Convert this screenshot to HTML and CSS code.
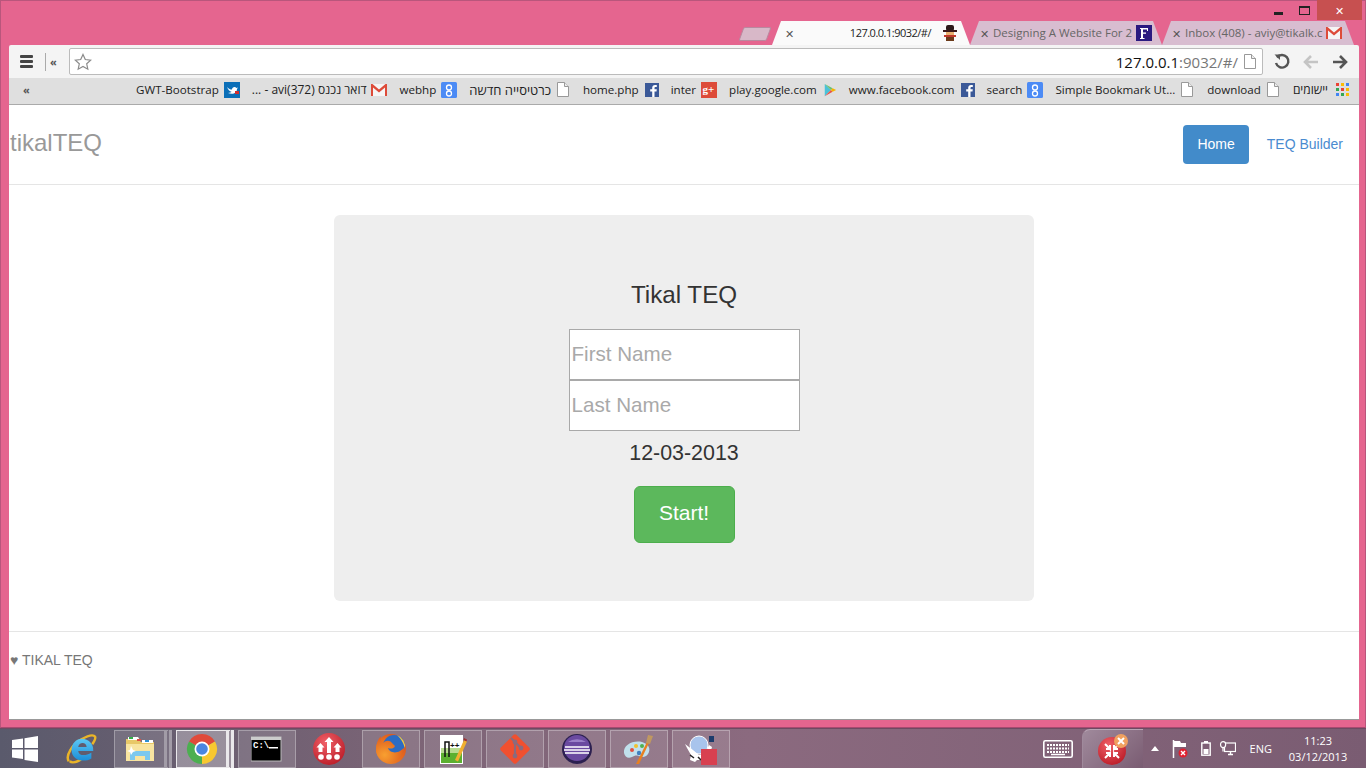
FILE: index.html
```html
<!DOCTYPE html>
<html lang="en">
<head>
    <meta charset="UTF-8">
    <meta name="viewport" content="width=device-width, initial-scale=1.0">
    <title>tikalTEQ</title>
    <link rel="stylesheet" href="styles.css">
</head>
<body>

    <svg class="defs" width="0" height="0">
        <symbol id="i-doc" viewBox="0 0 12 15"><path d="M.5.5h7l4 4v10H.5z" fill="#fff" stroke="#999"/><path d="M7.5.5v4h4" fill="#eee" stroke="#999"/></symbol>
        <symbol id="i-gmail" viewBox="0 0 16 12"><rect width="16" height="12" fill="#f5f5f5"/><path d="M0 0h1.500L8 5.500 14.500 0H16v12h-2V3.500L8 8.500 2 3.500V12H0z" fill="#dd4b39"/></symbol>
        <symbol id="i-g" viewBox="0 0 16 16"><rect width="16" height="16" rx="1.500" fill="#4c8bf5"/><circle cx="8" cy="5.500" r="2.500" fill="none" stroke="#fff" stroke-width="1.300"/><circle cx="8" cy="11.500" r="2.500" fill="none" stroke="#fff" stroke-width="1.300"/></symbol>
        <symbol id="i-fb" viewBox="0 0 14 14"><rect width="14" height="14" fill="#3b5998"/><path d="M9.500 14V8.500h2l.3-2.200H9.500V5c0-.7.300-1.100 1.100-1.100h1.200V2c-.5-.1-1.100-.1-1.700-.1-1.800 0-2.900 1-2.900 2.900v1.500h-2v2.200h2V14z" fill="#fff"/></symbol>
        <linearGradient id="g-ie" x1="0" y1="0" x2="0" y2="1"><stop offset="0" stop-color="#5cc8f4"/><stop offset="1" stop-color="#1c8ed8"/></linearGradient>
        <radialGradient id="g-red" cx=".4" cy=".3" r=".8"><stop offset="0" stop-color="#f06068"/><stop offset="1" stop-color="#b81824"/></radialGradient>
        <radialGradient id="g-fox" cx=".3" cy=".7" r=".9"><stop offset="0" stop-color="#f8a030"/><stop offset="1" stop-color="#d84a18"/></radialGradient>
    </svg>

    <div class="window">
        <div class="window-controls">
            <span class="win-btn"><i class="min"></i></span>
            <span class="win-btn"><i class="max"></i></span>
            <span class="win-btn close">&#10005;</span>
        </div>

        <div class="tabstrip">
            <span class="new-tab"></span>
            <div class="tab active">
                <span class="tab-x">&#10005;</span>
                <span class="tab-title">127.0.0.1:9032/#/</span>
                <svg class="tab-icon" viewBox="0 0 16 16"><rect x="4" y="0" width="8" height="6" rx="2" fill="#2a1a1a"/><rect x="1" y="5" width="14" height="2" fill="#3a1a1a"/><rect x="4" y="7" width="8" height="3" fill="#e8b070"/><rect x="2" y="10" width="12" height="2" fill="#c0392b"/><rect x="4" y="12" width="8" height="4" fill="#6b3a1a"/></svg>
            </div>
            <div class="tab">
                <span class="tab-x">&#10005;</span>
                <span class="tab-title">Designing A Website For 2</span>
                <svg class="tab-icon" viewBox="0 0 16 16"><rect width="16" height="16" fill="#2a1a80"/><path d="M4 3h8v3h-1V4.500H7v3h3v1.300H7V13h1.500v1H4v-1h1V4H4z" fill="#fff"/></svg>
            </div>
            <div class="tab">
                <span class="tab-x">&#10005;</span>
                <span class="tab-title">Inbox (408) - aviy@tikalk.c</span>
                <svg class="tab-icon"><use href="#i-gmail"/></svg>
            </div>
        </div>

        <div class="chrome">
            <div class="toolbar">
                <div class="menu-icon"><i></i><i></i><i></i></div>
                <span class="tool-sep"></span>
                <span class="chevrons">&laquo;</span>
                <div class="omnibox">
                    <svg class="star" viewBox="0 0 18 18"><path d="M9 1.500l2.300 5 5.400.6-4 3.700 1.100 5.400L9 13.500l-4.800 2.700 1.100-5.400-4-3.700 5.400-.6z" fill="#fff" stroke="#8a8a8a" stroke-width="1.200"/></svg>
                    <span class="url"><b>127.0.0.1</b>:9032/#/</span>
                    <svg class="url-doc"><use href="#i-doc"/></svg>
                </div>
                <svg class="nav-icon reload" viewBox="0 0 18 18"><path d="M4 4.500A6.300 6.300 0 1 1 3 10" fill="none" stroke="#555" stroke-width="2.400"/><path d="M1.500 1.500h5.500v5.500z" fill="#555"/></svg>
                <svg class="nav-icon back" viewBox="0 0 18 18"><path d="M17 9H5M10 3L4 9l6 6" fill="none" stroke="#c4c4c4" stroke-width="2.600"/></svg>
                <svg class="nav-icon" viewBox="0 0 18 18"><path d="M1 9h12M8 3l6 6-6 6" fill="none" stroke="#555" stroke-width="2.600"/></svg>
            </div>

            <div class="bookmarks">
                <span class="chevrons bm-more">&laquo;</span>
                <a class="bm">GWT-Bootstrap<svg class="bm-icon" viewBox="0 0 16 16"><rect width="16" height="16" fill="#0b6fb8"/><path d="M3 5c2 2 3 2.500 5 2.500C8 5 11 4 12.500 6L14 5.500 13 7c0 4-4 6-9 4 2 0 3-.5 3.500-1.200C5.500 9.500 4 7.500 3 5z" fill="#fff"/><rect x="11" y="9" width="4" height="3" fill="#d03030"/></svg></a>
                <a class="bm"><bdi dir="rtl">דואר נכנס (372)avi - ...</bdi><svg class="bm-icon"><use href="#i-gmail"/></svg></a>
                <a class="bm">webhp<svg class="bm-icon"><use href="#i-g"/></svg></a>
                <a class="bm"><bdi dir="rtl" class="he-wide">כרטיסייה חדשה</bdi><svg class="bm-doc"><use href="#i-doc"/></svg></a>
                <a class="bm">home.php<svg class="bm-icon fb"><use href="#i-fb"/></svg></a>
                <a class="bm">inter<svg class="bm-icon" viewBox="0 0 16 16"><rect width="16" height="16" fill="#dd4b39"/><text x="1.500" y="11" class="gplus-text">g+</text></svg></a>
                <a class="bm">play.google.com<svg class="bm-icon fb" viewBox="0 0 14 16"><path d="M1 1l7 7-7 7z" fill="#4cc2d8"/><path d="M1 1l9 5-2 2z" fill="#6cc070"/><path d="M1 15l9-5-2-2z" fill="#e8544a"/><path d="M10 6l4 2-4 2-2-2z" fill="#f4b400"/></svg></a>
                <a class="bm">www.facebook.com<svg class="bm-icon fb"><use href="#i-fb"/></svg></a>
                <a class="bm">search<svg class="bm-icon"><use href="#i-g"/></svg></a>
                <a class="bm">Simple Bookmark Ut...<svg class="bm-doc"><use href="#i-doc"/></svg></a>
                <a class="bm">download<svg class="bm-doc"><use href="#i-doc"/></svg></a>
                <a class="bm"><bdi dir="rtl">יישומים</bdi><svg class="bm-apps" viewBox="0 0 13 13"><rect width="3" height="3" fill="#ea4335"/><rect x="5" width="3" height="3" fill="#fbbc05"/><rect x="10" width="3" height="3" fill="#4285f4"/><rect y="5" width="3" height="3" fill="#34a853"/><rect x="5" y="5" width="3" height="3" fill="#ea4335"/><rect x="10" y="5" width="3" height="3" fill="#fbbc05"/><rect y="10" width="3" height="3" fill="#4285f4"/><rect x="5" y="10" width="3" height="3" fill="#34a853"/><rect x="10" y="10" width="3" height="3" fill="#fbbc05"/></svg></a>
            </div>

            <div class="page">
                <nav class="navbar">
                    <a class="brand">tikalTEQ</a>
                    <ul class="nav">
                        <li class="current">Home</li>
                        <li>TEQ Builder</li>
                    </ul>
                </nav>

                <div class="jumbotron">
                    <h2>Tikal TEQ</h2>
                    <input type="text" placeholder="First Name">
                    <input type="text" placeholder="Last Name">
                    <p class="date">12-03-2013</p>
                    <button class="btn-start">Start!</button>
                </div>

                <footer class="footer">&hearts; TIKAL TEQ</footer>
            </div>
        </div>
    </div>

    <div class="taskbar">
        <div class="start">
            <svg viewBox="0 0 26 26" width="26" height="26"><path d="M0 4l11-1.500V12H0zM12.500 2.300L26 0v12H12.500zM0 13.500h11V23L0 21.500zM12.500 13.500H26V26l-13.500-2z" fill="#fff"/></svg>
        </div>
        <div class="task plain">
            <svg viewBox="0 0 34 34"><path d="M4 30C0 24 8 12 17 7c7-4 13-6 15-3 1 2-1 5-3 8" fill="none" stroke="#eab428" stroke-width="2.600"/><path d="M5 30c2 2 7 1 12-2" fill="none" stroke="#eab428" stroke-width="2.600"/><path d="M18 6a12 12 0 0 1 12 13H14c.5 5 7 6 14 2v6c-8 5-21 2-21-9 0-7 5-12 11-12zm-4 9h9c0-6-8.500-6-9 0z" fill="url(#g-ie)"/></svg>
        </div>
        <div class="task stacked">
            <svg viewBox="0 0 32 32"><path d="M2 6h12l3 3h13v19H2z" fill="#e8c868"/><path d="M4 4h10l2 3H4z" fill="#fff"/><rect x="5" y="4" width="4" height="2" fill="#34b048"/><rect x="13" y="6" width="4" height="2" fill="#e05040"/><path d="M18 7h11v3H18z" fill="#fff"/><rect x="21" y="7" width="4" height="2" fill="#3090d0"/><path d="M2 11h28v17H2z" fill="#f8e4a0"/><path d="M6 27v-9h20v9h-5v-4H11v4z" fill="#7cc8ee"/><path d="M7 13l2 4 3 1-3 1-2 3-1-3-3-1 3-1z" fill="#fff"/></svg>
        </div>
        <div class="task stacked light">
            <svg viewBox="0 0 32 32"><path d="M3 8.500A15 15 0 0 1 29 8.500L16 16z" fill="#e04a3a"/><path d="M29 8.500A15 15 0 0 1 16 31L16 16z" fill="#f8c830"/><path d="M16 31A15 15 0 0 1 3 8.500L16 16z" fill="#4caf50"/><circle cx="16" cy="16" r="7.500" fill="#fff"/><circle cx="16" cy="16" r="5.800" fill="#4a86e0"/></svg>
        </div>
        <div class="task">
            <svg viewBox="0 0 32 28"><rect width="30" height="24" y="2" fill="#000" stroke="#bbb"/><rect y="2" width="30" height="3" fill="#ccc"/><text x="2" y="13" class="cmd-text">C:\</text><rect x="18" y="12" width="9" height="1.500" fill="#fff"/></svg>
        </div>
        <div class="task plain">
            <svg viewBox="0 0 32 32"><circle cx="16" cy="16" r="16" fill="url(#g-red)"/><path d="M16 4l4.500 5H18v11h-4V9h-2.500zM7.500 10l4 4.500h-2V19h-4v-4.500h-2zM24.500 10l4 4.500h-2V19h-4v-4.500h-2z" fill="#fff"/><circle cx="8" cy="24" r="2.800" fill="#fff"/><circle cx="16" cy="24" r="2.800" fill="#fff"/><circle cx="24" cy="24" r="2.800" fill="#fff"/></svg>
        </div>
        <div class="task">
            <svg viewBox="0 0 32 32"><circle cx="16" cy="16" r="15" fill="url(#g-fox)"/><circle cx="19" cy="13" r="11" fill="#2c6cc4"/><path d="M22 2a13 13 0 0 1 8 14c-1-5-3-9-8-14z" fill="#f4c840"/><path d="M6 3c-1 3 0 5 2 7 3-3 7-3 9 0l3 3c-1 3-5 3-7 2 1 4 7 6 12 3 1-1 3-2 5-4-1 9-7 16-15 16C7 30 1 24 1 16 1 11 3 6 6 3z" fill="url(#g-fox)"/></svg>
        </div>
        <div class="task">
            <svg viewBox="0 0 32 32"><rect x="3" y="2" width="23" height="29" fill="#fff"/><path d="M4 19h21v11H4z" fill="#5cb030"/><path d="M4 15h21v5H4z" fill="#b8dc90"/><path d="M8 24V9h4v15" fill="none" stroke="#111" stroke-width="1.500"/><text x="13" y="15" class="np-text">++</text><path d="M18 27l9-20 3 1.500-9 20z" fill="#f0b030"/><path d="M27 5l3 1.500-.5 2-3-1.500z" fill="#a03030"/></svg>
        </div>
        <div class="task">
            <svg viewBox="0 0 32 32"><rect x="5" y="5" width="22" height="22" rx="2" transform="rotate(45 16 16)" fill="#f05030"/><path d="M12 5l4 4M16 9v14M16 9l6 6" stroke="#8c6a7c" stroke-width="2.200" fill="none"/><circle cx="16" cy="9" r="2.400" fill="#8c6a7c"/><circle cx="16" cy="23" r="2.400" fill="#8c6a7c"/><circle cx="22" cy="15" r="2.400" fill="#8c6a7c"/></svg>
        </div>
        <div class="task">
            <svg viewBox="0 0 32 32"><circle cx="16" cy="16" r="15" fill="#2c2050"/><circle cx="16" cy="15" r="13" fill="#6a4aa0"/><path d="M4 14h24M3 17h26M4 20h24" stroke="#fff" stroke-width="1.400"/><path d="M7 9a12 8 0 0 1 18 0z" fill="#9a80c8"/></svg>
        </div>
        <div class="task">
            <svg viewBox="0 0 32 32"><path d="M1 20C0 12 10 7 19 9c7 2 9 7 6 12-3 4-6 3-9 2-3-1-5 0-7 1-4 2-7 0-8-4z" fill="#c0e0ec"/><circle cx="9" cy="17" r="2" fill="#e05040"/><circle cx="13" cy="13" r="2" fill="#f0c030"/><circle cx="19" cy="13" r="2" fill="#50b050"/><circle cx="16" cy="20" r="2.200" fill="#4080c0"/><path d="M13 31L24 9l2 1-10 21z" fill="#e88020"/><path d="M23 10l2-8 5 1-3 8z" fill="#c09860"/></svg>
        </div>
        <div class="task">
            <svg viewBox="0 0 32 32"><circle cx="14" cy="12" r="9" fill="#a8c4ec" stroke="#fff"/><path d="M0 11l8 6 6 5 6-2 4-8 3 2-3 10-4 3h-8l-2 2-5-2 1-5-4-7z" fill="#fff"/><path d="M5 22l4 3M13 24l3 3" stroke="#222" stroke-width="1.500"/><path d="M24 3h5v6h-5z" fill="#1c3c6c"/><rect x="16" y="16" width="16" height="16" fill="#d84050"/></svg>
        </div>

        <div class="tray">
            <svg class="keyboard" viewBox="0 0 30 18"><rect x=".8" y=".8" width="28.400" height="16.400" rx="1.500" fill="none" stroke="#fff" stroke-width="1.600"/><path d="M4 5h22M4 8.500h22M4 12h22" stroke="#fff" stroke-width="2" stroke-dasharray="2 1"/><path d="M8 14.500h14" stroke="#fff" stroke-width="1.500"/></svg>
            <div class="tray-app">
                <svg viewBox="0 0 34 34" width="34" height="34"><circle cx="16" cy="19" r="14" fill="url(#g-red)"/><path d="M9 12l5 5v-4M14 17h-4M23 12l-5 5v-4M18 17h4M9 26l5-5v4M14 21h-4M23 26l-5-5v4M18 21h4" fill="none" stroke="#fff" stroke-width="2"/><circle cx="25" cy="9" r="7" fill="#f0a060"/><path d="M22 6l6 6M28 6l-6 6" stroke="#fff" stroke-width="2"/></svg>
            </div>
            <span class="tray-arrow"></span>
            <svg class="tray-icon flag" viewBox="0 0 16 18"><path d="M1.500 0v18" stroke="#fff" stroke-width="1.500"/><path d="M2 1h6l1 2h5v4H2z" fill="#fff"/><circle cx="11" cy="13" r="4.500" fill="#e02030"/><path d="M9 11l4 4M13 11l-4 4" stroke="#fff" stroke-width="1.400"/></svg>
            <svg class="tray-icon battery" viewBox="0 0 10 15"><rect x=".8" y="2" width="8.400" height="12.200" fill="none" stroke="#fff" stroke-width="1.400"/><rect x="3" y="0" width="4" height="2" fill="#fff"/><rect x="2.500" y="8" width="5" height="5" fill="#fff"/></svg>
            <svg class="tray-icon network" viewBox="0 0 16 15"><rect x="4.500" y="2" width="11" height="8.500" fill="none" stroke="#fff" stroke-width="1.200"/><path d="M8 13.500h5M10.500 10.500v3" stroke="#fff" stroke-width="1.400"/><rect x=".6" y=".6" width="5" height="6" rx="2.500" fill="#7a5c72" stroke="#fff" stroke-width="1.200"/><path d="M3 6.500v4" stroke="#fff" stroke-width="1.200"/></svg>
            <span class="lang">ENG</span>
            <div class="clock"><span>11:23</span><span>03/12/2013</span></div>
        </div>
    </div>

</body>
</html>
```

FILE: styles.css
```css
* {
    box-sizing: border-box;
}

body {
    margin: 0;
    height: 100vh;
    overflow: hidden;
    display: flex;
    flex-direction: column;
    background-color: #e5658f;
    font-family: "Open Sans", sans-serif;
}

.defs {
    position: absolute;
}

/* browser window */
.window {
    flex: 1;
    min-height: 0;
    display: flex;
    flex-direction: column;
    position: relative;
    padding: 0 6px 7px 8px;
    border: 1px solid #b9567c;
    border-bottom-color: #a84a70;
}

.window-controls {
    position: absolute;
    top: -1px;
    right: 3px;
    display: flex;
    align-items: flex-start;
}

.win-btn {
    width: 26px;
    height: 20px;
    display: flex;
    align-items: center;
    justify-content: center;
}

.win-btn .min {
    width: 9px;
    height: 3px;
    margin-top: 6px;
    background-color: #222;
}

.win-btn .max {
    width: 11px;
    height: 9px;
    border: 1px solid #222;
    border-top-width: 2px;
}

.win-btn.close {
    width: 45px;
    background-color: #c75050;
    color: #fff;
    font-size: 11px;
}

.tabstrip {
    height: 44px;
    flex-shrink: 0;
    display: flex;
    justify-content: flex-end;
    align-items: flex-end;
    padding-right: 5px;
}

.new-tab {
    width: 28px;
    height: 14px;
    margin-right: 3px;
    margin-bottom: 4px;
    background-color: #d8b8c8;
    border: 1px solid #b9899f;
    border-radius: 2px;
    transform: skewX(-20deg);
}

.tab {
    height: 24px;
    width: 192px;
    display: flex;
    align-items: center;
    padding: 0 12px 0 10px;
    font-size: 11.500px;
    color: #666;
    background-color: #d8bdd0;
    clip-path: polygon(0 100%, 9px 0, calc(100% - 9px) 0, 100% 100%);
}

.tab.active {
    width: 198px;
    color: #222;
    background-color: #fafafa;
    padding-left: 13px;
}

.tab.active .tab-title {
    font-size: 11px;
    letter-spacing: -0.5px;
}

.tab-x {
    font-size: 11px;
    width: 13px;
    flex-shrink: 0;
    color: #555;
}

.tab-title {
    flex: 1;
    margin-bottom: 2px;
    text-align: right;
    white-space: nowrap;
}

.tab-icon {
    width: 16px;
    height: 16px;
    margin-left: 4px;
    flex-shrink: 0;
}

.tab.active .tab-icon {
    margin-left: 11px;
}

.chrome {
    flex: 1;
    min-height: 0;
    display: flex;
    flex-direction: column;
    border-bottom: 1px solid #999;
}

.toolbar {
    height: 33px;
    flex-shrink: 0;
    display: flex;
    align-items: center;
    padding: 0 9px 0 11px;
    background-color: #f4f4f4;
    border-radius: 2px 2px 0 0;
}

.menu-icon {
    width: 13px;
    display: flex;
    flex-direction: column;
    gap: 2px;
}

.menu-icon i {
    display: block;
    height: 3px;
    background-color: #444;
    border-radius: 1px;
}

.tool-sep {
    width: 1px;
    height: 18px;
    margin: 0 4px 0 12px;
    background-color: #aaa;
}

.chevrons {
    font-size: 11px;
    color: #555;
    font-weight: 700;
    width: 19px;
}

.omnibox {
    flex: 1;
    height: 27px;
    display: flex;
    align-items: center;
    padding: 0 6px 0 4px;
    background-color: #fff;
    border: 1px solid #bbb;
    border-radius: 2px;
    margin-right: 10px;
}

.star {
    width: 18px;
    height: 18px;
}

.url {
    flex: 1;
    text-align: right;
    font-size: 15px;
    color: #777;
}

.url b {
    font-weight: 400;
    color: #111;
}

.url-doc {
    width: 12px;
    height: 15px;
    margin-left: 6px;
}

.nav-icon {
    width: 18px;
    height: 18px;
}

.nav-icon.reload {
    margin-right: 10px;
}

.nav-icon.back {
    margin-right: 13px;
}

.bookmarks {
    height: 27px;
    flex-shrink: 0;
    display: flex;
    align-items: center;
    justify-content: flex-end;
    gap: 12px;
    padding: 0 10px 3px 14px;
    background-color: #dfdfdf;
    border-bottom: 1px solid #aaa;
    font-size: 11.600px;
    color: #222;
}

.bm-more {
    margin-right: auto;
}

.bm {
    display: flex;
    align-items: center;
    gap: 5px;
    white-space: nowrap;
}

.bm bdi {
    font-size: 12px;
}

.bm bdi.he-wide {
    font-size: 13px;
}

.bm-icon {
    width: 16px;
    height: 16px;
}

.bm-icon.fb {
    width: 14px;
    height: 14px;
    margin-left: 1px;
}

.bm-doc {
    width: 12px;
    height: 15px;
    margin: 0 2px 0 1px;
}

.bm-apps {
    width: 13px;
    height: 13px;
    margin-left: 3px;
}

.gplus-text {
    font-family: "Liberation Serif", serif;
    font-size: 11px;
    font-weight: 700;
    fill: #fff;
}

/* page inside the browser */
.page {
    flex: 1;
    min-height: 0;
    background-color: #fff;
    font-family: "Liberation Sans", Arial, sans-serif;
    color: #333;
}

.navbar {
    height: 80px;
    display: flex;
    align-items: center;
    justify-content: space-between;
    border-bottom: 1px solid #e5e5e5;
    padding: 0 1px;
}

.brand {
    font-size: 24px;
    color: #999;
    margin-bottom: 3px;
}

.nav {
    list-style: none;
    margin: 0;
    padding: 0;
    display: flex;
    gap: 3px;
    font-size: 14px;
    color: #4a8bd0;
}

.nav li {
    padding: 11px 15px;
    height: 39px;
    border-radius: 4px;
}

.nav .current {
    padding: 11px 14px;
    color: #fff;
    background-color: #428bca;
}

.jumbotron {
    width: 700px;
    height: 386px;
    margin: 30px auto;
    padding-top: 64px;
    display: flex;
    flex-direction: column;
    align-items: center;
    background-color: #eee;
    border-radius: 6px;
}

.jumbotron h2 {
    margin: 0 0 18px;
    font-size: 24.200px;
    line-height: 32px;
    font-weight: 400;
}

.jumbotron input {
    width: 231px;
    height: 51px;
    padding: 0 2px 2px;
    border: 1px solid #a9a9a9;
    border-radius: 0;
    font-family: inherit;
    font-size: 20.600px;
    background-color: #fff;
}

.jumbotron input::placeholder {
    color: #a9a9a9;
}

.date {
    margin: 7px 0 18px;
    font-size: 21.400px;
    line-height: 30px;
}

.btn-start {
    width: 101px;
    height: 57px;
    padding: 0 0 3px;
    font-family: inherit;
    font-size: 21px;
    color: #fff;
    background-color: #5cb85c;
    border: 1px solid #4cae4c;
    border-radius: 6px;
}

.footer {
    border-top: 1px solid #e5e5e5;
    padding: 19px 1px 0;
    font-size: 14px;
    line-height: 18px;
    color: #777;
}

/* windows taskbar */
.taskbar {
    height: 40px;
    flex-shrink: 0;
    display: flex;
    align-items: center;
    gap: 4px;
    background: linear-gradient(90deg, #5a5a6c 0%, #7c6476 30%, #8b6a7f 55%, #7a5c72 100%);
    border-top: 1px solid #6e4a62;
}

.start {
    width: 48px;
    height: 38px;
    display: flex;
    align-items: center;
    justify-content: center;
    padding-left: 2px;
}

.task {
    width: 58px;
    height: 38px;
    flex-shrink: 0;
    display: flex;
    align-items: center;
    justify-content: center;
    background-color: rgba(255, 255, 255, 0.12);
    border: 1px solid rgba(255, 255, 255, 0.3);
}

.task svg {
    width: 32px;
    height: 32px;
}

.task.plain {
    background: none;
    border-color: transparent;
}

.task.stacked {
    border-right-width: 8px;
    border-right-style: double;
}

.task.light {
    background-color: rgba(255, 255, 255, 0.3);
    border-color: rgba(255, 255, 255, 0.8);
}

.cmd-text {
    font-family: "Liberation Mono", monospace;
    font-size: 9px;
    font-weight: 700;
    fill: #fff;
}

.np-text {
    font-family: "Liberation Sans", sans-serif;
    font-size: 8px;
    font-weight: 700;
    fill: #111;
}

.tray {
    margin-left: auto;
    height: 100%;
    display: flex;
    align-items: center;
    color: #fff;
    font-size: 11px;
}

.keyboard {
    width: 30px;
    height: 18px;
    margin-right: 9px;
}

.tray-app {
    width: 61px;
    height: 39px;
    display: flex;
    align-items: center;
    justify-content: center;
    background: linear-gradient(135deg, #a08a9c, #7a5c72);
    border-top: 1px solid #b8a4b4;
    border-left: 1px solid #a08a9c;
    border-radius: 8px 0 0 0;
    margin-right: 8px;
}

.tray-arrow {
    width: 0;
    height: 0;
    border: 4px solid transparent;
    border-bottom: 5px solid #fff;
    border-top: 0;
    margin-right: 13px;
}

.tray-icon {
    flex-shrink: 0;
}

.flag {
    width: 16px;
    height: 18px;
    margin-right: 13px;
}

.battery {
    width: 10px;
    height: 15px;
    margin-right: 9px;
}

.network {
    width: 16px;
    height: 15px;
    margin-right: 14px;
}

.lang {
    margin-right: 10px;
}

.clock {
    width: 72px;
    margin-right: 12px;
    display: flex;
    flex-direction: column;
    align-items: center;
    gap: 1px;
    line-height: 15px;
}
```
